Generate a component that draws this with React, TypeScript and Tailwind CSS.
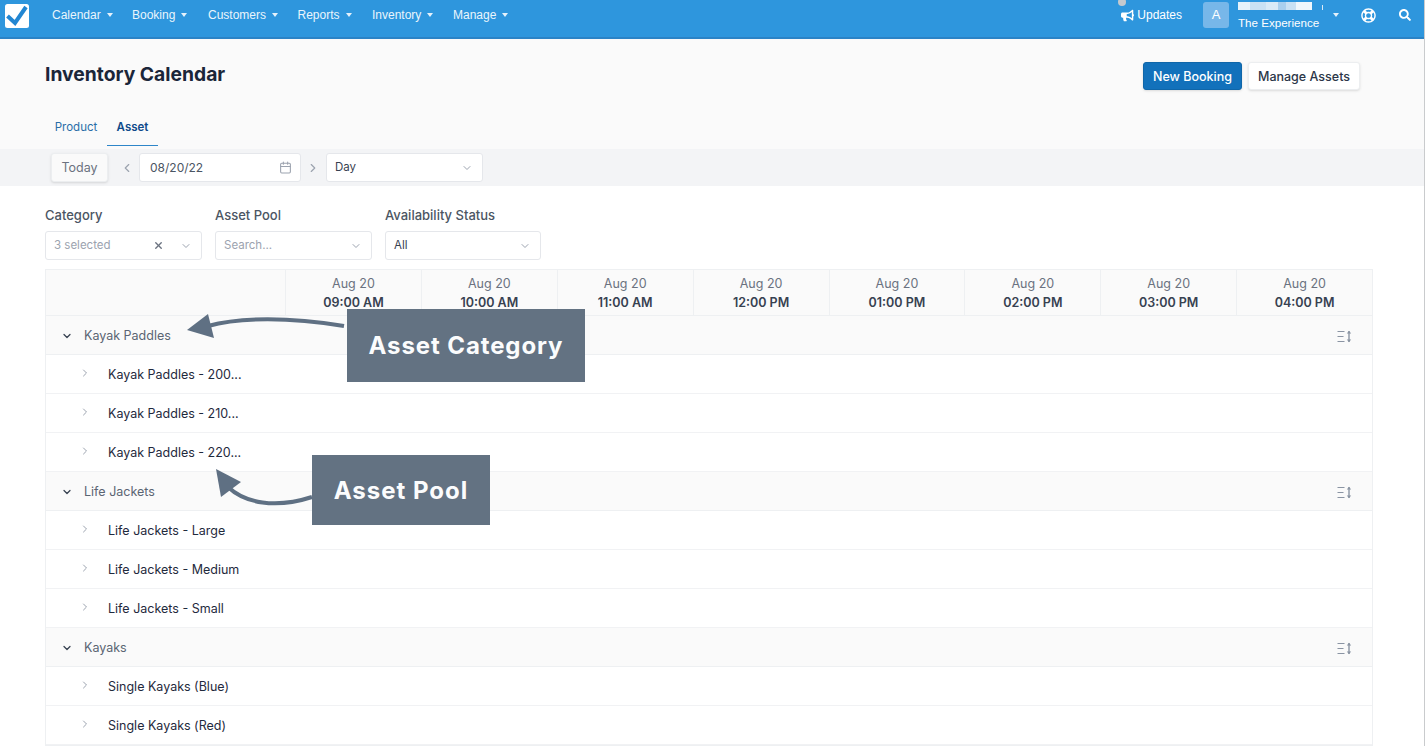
import { Calendar, ChevronDown, ChevronLeft, ChevronRight, X } from "lucide-react";
import { FaBullhorn, FaRegLifeRing, FaSearch } from "react-icons/fa";

const NAV = [
  { label: "Calendar", width: "w-[80px]" },
  { label: "Booking", width: "w-[76px]" },
  { label: "Customers", width: "w-[89.5px]" },
  { label: "Reports", width: "w-[74.5px]" },
  { label: "Inventory", width: "w-[81px]" },
  { label: "Manage", width: "w-[70px]" },
];

const HOURS = ["09:00 AM", "10:00 AM", "11:00 AM", "12:00 PM", "01:00 PM", "02:00 PM", "03:00 PM", "04:00 PM"];

const GROUPS = [
  { name: "Kayak Paddles", pools: ["Kayak Paddles - 200...", "Kayak Paddles - 210...", "Kayak Paddles - 220..."] },
  { name: "Life Jackets", pools: ["Life Jackets - Large", "Life Jackets - Medium", "Life Jackets - Small"] },
  { name: "Kayaks", pools: ["Single Kayaks (Blue)", "Single Kayaks (Red)"] },
];

function Caret() {
  return <span className="ml-[6px] inline-block h-0 w-0 border-x-[3.5px] border-t-[4px] border-x-transparent border-t-[#e4f1fb]" />;
}

function Logo() {
  return (
    <svg width="24" height="24" viewBox="0 0 24 24" className="mt-[2px] ml-[5px]">
      <rect width="24" height="24" rx="2.5" fill="#ffffff" />
      <path d="M2.5 12 L10 19 L21 3" fill="none" stroke="#2286d2" strokeWidth="4" />
    </svg>
  );
}

function TopNav() {
  return (
    <div className="flex h-[39px] items-center border-b-2 border-[#2b83c6] bg-[#2e96dd] pr-[13px] pb-[7px] font-['Liberation_Sans',sans-serif] text-[12px] text-[#eaf5fc]">
      <Logo />
      <div className="ml-[23px] flex">
        {NAV.map((item) => (
          <div key={item.label} className={`flex items-center ${item.width}`}>
            {item.label}
            <Caret />
          </div>
        ))}
      </div>
      <div className="relative ml-auto flex items-center gap-[3px] text-white">
        <span className="absolute top-[-8px] left-[-3px] size-[8px] rounded-full bg-[#c4c9ce]" />
        <FaBullhorn className="size-[13px]" />
        Updates
      </div>
      <div className="ml-[21px] flex size-[26px] items-center justify-center rounded-[3px] bg-[#77b7e9] text-[13px] text-white">A</div>
      <div className="mt-[2px] ml-[9px] w-[89px] self-start">
        <div className="flex h-[8px]">
          <span className="w-[12px] bg-[#e6f2fb]" />
          <span className="w-[16px] bg-[#c9e1f4]" />
          <span className="w-[12px] bg-[#d9eaf7]" />
          <span className="w-[8px] bg-[#a9cfee]" />
          <span className="w-[10px] bg-[#c9e1f4]" />
          <span className="w-[16px] bg-[#f0f7fc]" />
          <span className="mt-[3px] ml-[10px] h-[5px] w-px bg-[#d9eaf7]" />
        </div>
        <div className="mt-[6px] text-[11.6px] leading-[14px] whitespace-nowrap text-white">The Experience</div>
      </div>
      <Caret />
      <FaRegLifeRing className="ml-[22px] size-[15px] text-white" />
      <FaSearch className="ml-[23px] size-[12px] text-white" />
    </div>
  );
}

function PageHeader() {
  return (
    <div className="h-[110px] bg-[#fafafa]">
      <div className="flex items-start justify-between pr-[64px] pl-[45px]">
        <h1 className="mt-[22px] text-[19.3px] leading-[26px] font-bold text-[#1a2639]">Inventory Calendar</h1>
        <div className="mt-[23px] flex gap-[6px] text-[12.5px]">
          <button className="h-[28px] w-[99px] rounded-[3px] border border-[#0f66a9] bg-[#1271bb] pt-[2px] font-medium text-white shadow-sm">New Booking</button>
          <button className="h-[28px] w-[112px] rounded-[3px] border border-[#eceef0] bg-white pt-[2px] font-medium text-[#2b3648] shadow-sm">Manage Assets</button>
        </div>
      </div>
      <div className="mt-[28px] ml-[45px] flex text-[11.5px]">
        <div className="flex h-[28px] w-[62px] items-center justify-center pb-[8px] text-[#2a6ea8]">Product</div>
        <div className="flex h-[28px] w-[51px] items-center justify-center border-b-[1px] border-[#2e86c9] pb-[8px] font-semibold text-[#0f4a8a]">Asset</div>
      </div>
    </div>
  );
}

function Toolbar() {
  return (
    <div className="flex h-[37px] items-center bg-[#f3f4f6] pl-[51px]">
      <button className="h-[29px] w-[57px] rounded-[3px] border border-[#eceef0] bg-[#fafafa] pt-[1px] text-[12.5px] text-[#6b7280] shadow-sm">Today</button>
      <ChevronLeft className="ml-[12px] size-[14px] text-[#9ca3af]" />
      <div className="ml-[5px] flex h-[29px] w-[162px] items-center justify-between rounded-[3px] border border-[#e5e7eb] bg-white pr-[8px] pl-[10px] text-[12px] text-[#4b5563]">
        08/20/22
        <Calendar className="size-[13px] text-[#9ca3af]" />
      </div>
      <ChevronRight className="ml-[5px] size-[14px] text-[#9ca3af]" />
      <div className="ml-[6px] flex h-[29px] w-[157px] items-center justify-between rounded-[3px] border border-[#e5e7eb] bg-white pr-[9px] pl-[8px] text-[11.5px] text-[#374151]">
        Day
        <ChevronDown className="size-[12px] text-[#9ca3af]" />
      </div>
    </div>
  );
}

function Filters() {
  return (
    <div className="flex gap-[13px] pt-[22px] pl-[45px] text-[11.5px]">
      <div className="w-[157px]">
        <div className="text-[13px] leading-[15px] font-medium text-[#4b5563]">Category</div>
        <div className="mt-[8px] flex h-[29px] items-center rounded-[3px] border border-[#e5e7eb] pr-[9px] pl-[8px] text-[#9ca3af]">
          <span className="flex-1">3 selected</span>
          <X className="mr-[16px] size-[11px] text-[#6b7280]" strokeWidth={3} />
          <ChevronDown className="size-[12px]" />
        </div>
      </div>
      <div className="w-[157px]">
        <div className="text-[13px] leading-[15px] font-medium text-[#4b5563]">Asset Pool</div>
        <div className="mt-[8px] flex h-[29px] items-center justify-between rounded-[3px] border border-[#e5e7eb] pr-[9px] pl-[8px] text-[#9ca3af]">
          Search...
          <ChevronDown className="size-[12px]" />
        </div>
      </div>
      <div className="w-[156px]">
        <div className="text-[13px] leading-[15px] font-medium whitespace-nowrap text-[#4b5563]">Availability Status</div>
        <div className="mt-[8px] flex h-[29px] items-center justify-between rounded-[3px] border border-[#e5e7eb] pr-[9px] pl-[8px] text-[#374151]">
          All
          <ChevronDown className="size-[12px] text-[#9ca3af]" />
        </div>
      </div>
    </div>
  );
}

function ExpandAll() {
  return (
    <svg width="15" height="13" viewBox="0 0 15 13" fill="none" stroke="#8a94a3" strokeWidth="1">
      <path d="M0.5 1.5H7.5M0.5 6.5H6.5M0.5 11.5H7.5" />
      <path d="M12 1V12" strokeWidth="1.4" />
      <path d="M9.8 3.4L12 0.8L14.2 3.4Z M9.8 9.6L12 12.2L14.2 9.6Z" fill="#8a94a3" stroke="none" />
    </svg>
  );
}

function HeaderRow() {
  return (
    <div className="flex h-[46px] border-b border-[#eef0f2] bg-[#fafafa]">
      <div className="w-[240px] shrink-0 border-r border-[#eef0f2]" />
      {HOURS.map((h, i) => (
        <div key={h} className={`flex-1 pt-[5px] text-center ${i < 7 ? "border-r border-[#eef0f2]" : ""}`}>
          <div className="text-[12.5px] leading-[17px] text-[#6b7280]">Aug 20</div>
          <div className="mt-[2px] text-[12.5px] leading-[17px] font-semibold text-[#374151]">{h}</div>
        </div>
      ))}
    </div>
  );
}

function Group({ name, pools }: { name: string; pools: string[] }) {
  return (
    <>
      <div className="flex h-[39px] items-center border-b border-[#eef0f2] bg-[#fafafa] pt-[2px] pr-[20px] pl-[15px]">
        <ChevronDown className="size-[12px] text-[#374151]" strokeWidth={2.5} />
        <span className="ml-[11px] flex-1 text-[12.5px] text-[#5b6573]">{name}</span>
        <ExpandAll />
      </div>
      {pools.map((pool) => (
        <div key={pool} className="flex h-[39px] items-center border-b border-[#f1f2f4] pt-[2px] pl-[33px]">
          <ChevronRight className="mt-[-5px] size-[12px] text-[#9ca3af]" />
          <span className="ml-[17px] text-[12.5px] text-[#1f2a3d]">{pool}</span>
        </div>
      ))}
    </>
  );
}

function Annotations() {
  return (
    <>
      <div className="absolute top-[309px] left-[347px] flex h-[73px] w-[238px] items-center justify-center bg-[#637282] text-[24px] font-bold tracking-[0.9px] text-[#fbfcfd]">
        Asset Category
      </div>
      <div className="absolute top-[455px] left-[312px] flex h-[70px] w-[178px] items-center justify-center bg-[#637282] pt-[2px] text-[24px] font-bold tracking-[1px] text-[#fbfcfd]">
        Asset Pool
      </div>
      <svg className="absolute top-[300px] left-[180px]" width="180" height="50" viewBox="0 0 180 50" fill="none">
        <path d="M28 26 C60 17 110 17 164 26" stroke="#5f7083" strokeWidth="4" />
        <path d="M7 30 L28 14 L34 38 Z" fill="#5f7083" />
      </svg>
      <svg className="absolute top-[465px] left-[205px]" width="115" height="50" viewBox="0 0 115 50" fill="none">
        <path d="M23 22 C40 38 70 44 107 32" stroke="#5f7083" strokeWidth="4" />
        <path d="M11 4 L36 17 L16 32 Z" fill="#5f7083" />
      </svg>
    </>
  );
}

export default function App() {
  return (
    <div className="relative h-[746px] overflow-hidden border-r border-[#c9cbcd] bg-white font-['Inter',sans-serif]">
      <TopNav />
      <PageHeader />
      <Toolbar />
      <Filters />
      <div className="mt-[9px] ml-[45px] w-[1328px] border border-[#eef0f2]">
        <HeaderRow />
        {GROUPS.map((g) => (
          <Group key={g.name} name={g.name} pools={g.pools} />
        ))}
      </div>
      <Annotations />
    </div>
  );
}
